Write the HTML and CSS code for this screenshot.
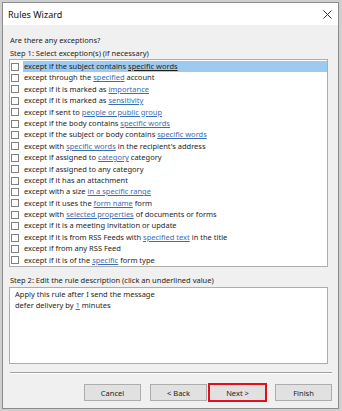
FILE: index.html
```html
<!DOCTYPE html>
<html>
<head>
  <title>Rules Wizard</title>
  <link rel="stylesheet" href="styles.css">
</head>
<body>
  <div class="window">
    <div class="titlebar">
      <span class="title">Rules Wizard</span>
      <svg class="close" width="9" height="9" viewBox="0 0 9 9">
        <path d="M0.5 0.5 L8.5 8.5 M8.5 0.5 L0.5 8.5" stroke="#333" stroke-width="1" fill="none"/>
      </svg>
    </div>

    <div class="content">
      <div class="prompt">Are there any exceptions?</div>
      <div class="step">Step 1: Select exception(s) (if necessary)</div>

      <div class="listbox">
        <div class="row sel"><span class="check"></span><span class="label">except if the subject contains <span class="lnk">specific words</span></span></div>
        <div class="row"><span class="check"></span><span class="label">except through the <span class="lnk">specified</span> account</span></div>
        <div class="row"><span class="check"></span><span class="label">except if it is marked as <span class="lnk">importance</span></span></div>
        <div class="row"><span class="check"></span><span class="label">except if it is marked as <span class="lnk">sensitivity</span></span></div>
        <div class="row"><span class="check"></span><span class="label">except if sent to <span class="lnk">people or public group</span></span></div>
        <div class="row"><span class="check"></span><span class="label">except if the body contains <span class="lnk">specific words</span></span></div>
        <div class="row"><span class="check"></span><span class="label">except if the subject or body contains <span class="lnk">specific words</span></span></div>
        <div class="row"><span class="check"></span><span class="label">except with <span class="lnk">specific words</span> in the recipient's address</span></div>
        <div class="row"><span class="check"></span><span class="label">except if assigned to <span class="lnk">category</span> category</span></div>
        <div class="row"><span class="check"></span><span class="label">except if assigned to any category</span></div>
        <div class="row"><span class="check"></span><span class="label">except if it has an attachment</span></div>
        <div class="row"><span class="check"></span><span class="label">except with a size <span class="lnk">in a specific range</span></span></div>
        <div class="row"><span class="check"></span><span class="label">except if it uses the <span class="lnk">form name</span> form</span></div>
        <div class="row"><span class="check"></span><span class="label">except with <span class="lnk">selected properties</span> of documents or forms</span></div>
        <div class="row"><span class="check"></span><span class="label">except if it is a meeting invitation or update</span></div>
        <div class="row"><span class="check"></span><span class="label">except if it is from RSS Feeds with <span class="lnk">specified text</span> in the title</span></div>
        <div class="row"><span class="check"></span><span class="label">except if from any RSS Feed</span></div>
        <div class="row"><span class="check"></span><span class="label">except if it is of the <span class="lnk">specific</span> form type</span></div>
      </div>

      <div class="step2">Step 2: Edit the rule description (click an underlined value)</div>
      <div class="desc">
        <div>Apply this rule after I send the message</div>
        <div>defer delivery by <span class="lnk">1</span> minutes</div>
      </div>

      <div class="sep"></div>

      <div class="buttons">
        <button class="btn cancel">Cancel</button>
        <button class="btn back">&lt; Back</button>
        <button class="btn next">Next &gt;</button>
        <button class="btn">Finish</button>
      </div>
    </div>
  </div>
</body>
</html>
```

FILE: styles.css
```css
body {
  margin: 0;
  background: #cfcfcf;
  font-family: 'Segoe UI', 'Noto Sans', sans-serif;
  font-size: 7.5px;
  color: #1e1e1e;
}

.window {
  margin: 2px 0 0 2px;
  width: 337px;
  height: 407px;
  box-sizing: border-box;
  border: 1px solid #8c8c8c;
  background: #f0f0f0;
  display: flex;
  flex-direction: column;
}

.titlebar {
  height: 22px;
  flex-shrink: 0;
  background: #fff;
  display: flex;
  align-items: center;
  justify-content: space-between;
  padding: 0 6px 0 5px;
}

.title {
  font-size: 9px;
  color: #111;
}

.content {
  flex: 1;
  padding: 0 6px;
  display: flex;
  flex-direction: column;
}

.prompt {
  margin: 9px 0 0 1px;
  line-height: 12px;
}

.step {
  margin: 1px 0 0 1px;
  line-height: 12px;
}

.listbox {
  margin-right: 4px;
  border: 1px solid #adadad;
  background: #fff;
  padding: 1px 0 0 1px;
}

.row {
  height: 11.4px;
  display: flex;
  align-items: center;
}

.check {
  width: 8px;
  height: 8px;
  box-sizing: border-box;
  border: 1px solid #808080;
  background: #fff;
}

.label {
  flex: 1;
  margin-left: 4px;
  padding-left: 1px;
  line-height: 11.4px;
  white-space: nowrap;
}

.row.sel .label {
  background: #9fcaf0;
}

.lnk {
  color: #3a6db4;
  text-decoration: underline;
}

.row.sel .lnk {
  color: #1e1e1e;
}

.step2 {
  margin: 7px 0 0 1px;
  line-height: 12px;
}

.desc {
  margin: 1px 4px 0 0;
  height: 77px;
  box-sizing: border-box;
  border: 1px solid #adadad;
  background: #fff;
  padding: 1px 5px;
  line-height: 11px;
}

.sep {
  margin: 8px 0 0 1px;
  border-top: 1px solid #a0a0a0;
  border-bottom: 1px solid #fff;
}

.buttons {
  margin-top: 10px;
  display: flex;
  justify-content: flex-end;
}

.btn {
  width: 57px;
  height: 17px;
  box-sizing: border-box;
  border: 1px solid #adadad;
  background: #e1e1e1;
  font: inherit;
  color: #222;
  padding: 0;
  margin-left: 9px;
}

.btn.next {
  margin-left: 2px;
  outline: 2px solid #e3101c;
  outline-offset: -1px;
}
```
